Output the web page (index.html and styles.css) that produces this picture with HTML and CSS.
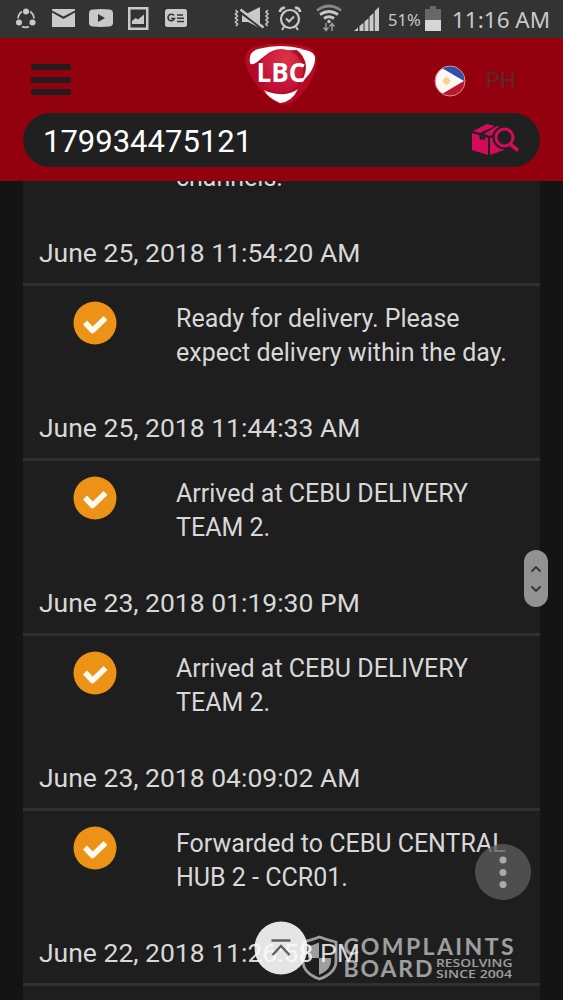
FILE: index.html
```html
<!DOCTYPE html>
<html lang="en">
<head>
<meta charset="utf-8">
<title>LBC Tracking</title>
<link rel="stylesheet" href="styles.css">
</head>
<body>
<div class="screen">
  <div class="statusbar">
    <svg class="status-icons" width="200" height="38" viewBox="0 0 200 38" fill="#c9c9c9">
      <g><circle cx="26" cy="11.500" r="3"/><circle cx="19" cy="22.500" r="3"/><circle cx="32.500" cy="22.500" r="3"/>
      <path d="M22 11.500a9 9 0 0 0-4 7M30 11.500a9 9 0 0 1 4 7M22 26.500a8 8 0 0 0 7 0" fill="none" stroke="#c9c9c9" stroke-width="1.700"/></g>
      <path d="M52 9h23v1.500L63.500 16.500 52 10.500zM52 12.500l11.500 6.500L75 12.500V27H52z"/>
      <path fill-rule="evenodd" d="M93 9.500q8-.8 16 0q4 0 4 4v9q0 4-4 4q-8 .8-16 0q-4 0-4-4v-9q0-4 4-4zM98 14v8l7-4z"/>
      <path fill-rule="evenodd" d="M128 7h20.500v23H128zM130.500 9.500v18H146v-18zM132 24v-3l3.500-3 2.500 1.500 6-5V24z"/>
      <rect x="165" y="9" width="22" height="18" rx="2.500"/>
      <path d="M174 15.500a3.300 3.300 0 1 0 .5 3h-3.500M177 15h6M177 18.300h7M177 21.500h7" fill="none" stroke="#333" stroke-width="1.600"/>
    </svg>
    <svg class="status-icons" width="153" height="38" viewBox="230 0 153 38" fill="none" stroke="#c9c9c9" stroke-width="1.600">
      <path d="M235.500 10l2 2-2 2 2 2-2 2 2 2-2 2 2 2-1.500 2M268 10l-2 2 2 2-2 2 2 2-2 2 2 2-2 2 1.500 2"/>
      <path d="M242 13h6l12-6v21l-12-6h-6z" fill="#c9c9c9" stroke="none"/><path d="M240 11l24 18" stroke="#333" stroke-width="4"/><path d="M240.500 9.500l23 18" stroke-width="2.400"/>
      <circle cx="290" cy="19" r="9" stroke-width="2.200"/><path d="M286 18.500l3 3 5-5M284 27l-2 3M296 27l2 3" stroke-width="2"/><path d="M280 12a4 4 0 0 1 5-4M295 8a4 4 0 0 1 5 4" stroke-width="2.800"/>
      <path d="M317 10.500q12-9 24 0" stroke="#888" stroke-width="2.700"/><path d="M320 14.500q9-6 18 0M324 18.500q5-3.500 10 0" stroke-width="2.800"/><circle cx="329" cy="21.500" r="1.700" fill="#c9c9c9" stroke="none"/>
      <path d="M326 23v7M323.500 27.500l2.500 3 2.500-3M332 31v-7M329.500 26.500l2.500-3 2.500 3" stroke="#999" stroke-width="1.500"/>
      <path d="M354 31l4-3.500V31zM359.500 26l4-3.200V31h-4zM364.500 21.500l4-3.300V31h-4zM369.500 16.500l4-3.500V31h-4zM374.700 11l4.300-4V31h-4.300z" fill="#c9c9c9" stroke="none"/>
    </svg>
    <span class="percent">51%</span>
    <svg class="battery" width="16" height="26" viewBox="0 0 16 26"><path d="M5 0h6v3h5v22H0V3h5z" fill="#686868"/><path d="M0 14h16v11H0z" fill="#d6d6d6"/></svg>
    <span class="clock">11:16 AM</span>
  </div>

  <header class="header">
    <div class="topnav">
      <div class="menu"><i></i><i></i><i></i></div>
      <svg class="logo" width="76" height="68" viewBox="0 0 76 68">
        <defs><radialGradient id="lg" cx=".6" cy=".25" r=".75"><stop offset="0" stop-color="#dd3448"/><stop offset="1" stop-color="#bd0c34"/></radialGradient></defs>
        <path d="M1 19Q2 8 14 6Q38 1 60 6Q72 8 73 20Q73 34 60 51Q49 65 38 65Q26 61 15 48Q2 32 1 19z" fill="#b60926"/>
        <path d="M6 23Q4 12 14 9Q37 3 59 9Q52 11 39 10Q25 12 18 18Q8 27 6 23z" fill="#fff"/>
        <circle cx="37" cy="31" r="22" fill="url(#lg)"/>
        <path d="M20 50Q25 53 35 54Q46 55 54 49Q48 62 36 63Q24 58 20 50z" fill="#fff"/>
        <path d="M51 9Q69 9 71 17Q72 29 57 43Q65 28 60 19Q57 12 51 9z" fill="#fff"/>
        <text x="12.500" y="41.500" textLength="49" lengthAdjust="spacingAndGlyphs" class="logo-text">LBC</text>
      </svg>
      <div class="country">
        <svg width="32" height="32" viewBox="0 0 32 32"><defs><clipPath id="fc"><circle cx="16" cy="16" r="14.500"/></clipPath></defs>
          <g clip-path="url(#fc)"><path d="M0 0h32v16H0z" fill="#2c4fb0"/><path d="M0 16h32v16H0z" fill="#bd1630"/><path d="M1-1 30 16 1 33H-5V-1z" fill="#fff8f2"/></g>
          <circle cx="12.500" cy="16" r="3" fill="#f7c56c"/><path d="M12.500 11v10M8 16h9M9.500 13l6 6M15.500 13l-6 6" stroke="#f9d596" stroke-width="1"/><circle cx="16" cy="16" r="15" fill="none" stroke="#d99" stroke-width="1"/></svg>
        <span>PH</span>
      </div>
    </div>
    <div class="search">
      <span>179934475121</span>
      <svg width="48" height="36" viewBox="0 0 48 36" fill="#d50a59">
        <path d="M0 11l16 5v17L0 28zM1 9L15 2l8 2-15 7zM25 4l7 2-14 8-6-2zM18 16l14-5v17l-14 5z"/>
        <path d="M7 13l6 2v4l-2-2-3 1z" fill="#202020"/>
        <circle cx="32.500" cy="15.500" r="12" fill="#202020"/><circle cx="32.500" cy="15.500" r="8.500" fill="#202020" stroke="#d50a59" stroke-width="3"/><path d="M38 22l8 6.500" stroke="#d50a59" stroke-width="3.800"/>
      </svg>
    </div>
  </header>

  <main class="content">
    <div class="list">
      <section class="row"><div class="event"><p><br>channels.</p></div><time>June 25, 2018 11:54:20 AM</time></section>
      <section class="row"><div class="event"><svg class="check" viewBox="0 0 44 44"><circle cx="22" cy="22" r="21.500"/><path d="M12 21.500l7.500 8L32.500 17"/></svg><p>Ready for delivery. Please<br>expect delivery within the day.</p></div><time>June 25, 2018 11:44:33 AM</time></section>
      <section class="row"><div class="event"><svg class="check" viewBox="0 0 44 44"><circle cx="22" cy="22" r="21.500"/><path d="M12 21.500l7.500 8L32.500 17"/></svg><p>Arrived at CEBU DELIVERY<br>TEAM 2.</p></div><time>June 23, 2018 01:19:30 PM</time></section>
      <section class="row"><div class="event"><svg class="check" viewBox="0 0 44 44"><circle cx="22" cy="22" r="21.500"/><path d="M12 21.500l7.500 8L32.500 17"/></svg><p>Arrived at CEBU DELIVERY<br>TEAM 2.</p></div><time>June 23, 2018 04:09:02 AM</time></section>
      <section class="row"><div class="event"><svg class="check" viewBox="0 0 44 44"><circle cx="22" cy="22" r="21.500"/><path d="M12 21.500l7.500 8L32.500 17"/></svg><p>Forwarded to CEBU CENTRAL<br>HUB 2 - CCR01.</p></div><time>June 22, 2018 11:26:58 PM</time></section>
      <section class="row"></section>
    </div>
  </main>

  <svg class="scroller" width="24" height="58" viewBox="0 0 24 58"><rect width="24" height="57" rx="12" fill="#929292"/><path d="M7.500 21.500l4.500-4.500 4.500 4.500M7.500 36.500l4.500 4.500 4.500-4.500" fill="none" stroke="#333" stroke-width="1.800"/></svg>
  <svg class="more" width="56" height="56" viewBox="0 0 56 56"><circle cx="28" cy="28" r="28" fill="#5c5c5c" opacity=".78"/><g fill="#aaa"><circle cx="28" cy="16" r="3.500"/><circle cx="28" cy="28.500" r="3.500"/><circle cx="28" cy="40.500" r="3.500"/></g></svg>
  <svg class="totop" width="54" height="54" viewBox="0 0 54 54"><circle cx="27" cy="27" r="26.500" fill="#fafafa" opacity=".91"/><path d="M17.500 19.500h19M18.500 34l8.500-9 8.500 9" fill="none" stroke="#606060" stroke-width="2.400"/></svg>
  <svg class="watermark" width="216" height="50" viewBox="300 935 216 50">
    <path d="M303 942Q312 940 319.500 937Q327 940 336 942V961Q336 973 319.500 979Q303 973 303 961z" fill="none" stroke="#fff" stroke-width="2.800"/>
    <path d="M308 946Q314 945 319 942.500V958H308zM319 958H331V961Q331 970 319 975z"/>
    <text class="wm-big" x="343.500" y="955" textLength="170">COMPLAINTS</text>
    <text class="wm-big" x="343.500" y="977" textLength="89">BOARD</text>
    <text class="wm-small" x="436" y="967" textLength="76.500" lengthAdjust="spacingAndGlyphs">RESOLVING</text>
    <text class="wm-small" x="436" y="977.500" textLength="76" lengthAdjust="spacingAndGlyphs">SINCE 2004</text>
  </svg>
</div>
</body>
</html>
```
FILE: styles.css
```css
* { box-sizing: border-box; }
body { margin: 0; background: #141414; font-family: Roboto, sans-serif; }
.screen { position: relative; width: 563px; height: 1000px; overflow: hidden; display: flex; flex-direction: column; background: #141414; }
svg { display: block; flex: none; }
.statusbar { height: 38px; flex: none; display: flex; align-items: center; background: #333; color: #c9c9c9; }
.status-icons + .status-icons { margin-left: 30px; }
.percent { width: 42px; padding-left: 5px; font: 16.500px "Noto Sans", sans-serif; white-space: nowrap; }
.clock { margin-left: 11px; font: 22.500px "Noto Sans", sans-serif; white-space: nowrap; }
.header { height: 143px; flex: none; background: #93000e; }
.topnav { height: 75px; display: flex; align-items: flex-start; }
.menu { display: flex; flex-direction: column; gap: 6.500px; margin: 26px 0 0 31px; }
.menu i { width: 40px; height: 6px; border-radius: 2px; background: #231b1d; }
.logo { margin: 2px 0 0 173px; }
.logo-text { font: bold 26px "Open Sans", sans-serif; fill: #fff; }
.country { display: flex; align-items: center; gap: 20px; margin: 27px 0 0 114px; color: #5b2a28; font-size: 22px; line-height: 30px; }
.search { height: 54px; margin: 0 23px; padding: 2px 20px 0 20px; border-radius: 27px; background: #202020; color: #fff; display: flex; align-items: center; justify-content: space-between; font-size: 31px; }
.search svg { margin-top: -2px; }
.content { flex: 1; min-height: 0; overflow: hidden; padding: 0 23px; }
.list { margin-top: -70px; background: #1e1e1e; }
.row { height: 175px; padding-top: 15px; border-bottom: 3px solid #303030; display: flex; flex-direction: column; }
.event { height: 109px; display: flex; padding-left: 49.500px; }
.event p { margin: 0; padding-top: .5px; color: #d8d8d8; font-size: 25px; line-height: 34.500px; white-space: nowrap; }
.event p:first-child { margin-left: 103.500px; }
.check { width: 44px; height: 44px; margin-right: 59.500px; }
.check circle { fill: #ec9317; }
.check path { fill: none; stroke: #fffaf0; stroke-width: 5.500; stroke-linejoin: round; }
.row time { padding-left: 16px; color: #d8d8d8; font-size: 26.500px; line-height: 35px; white-space: nowrap; }
.scroller { position: absolute; left: 524px; top: 550px; }
.more { position: absolute; left: 475px; top: 844px; }
.totop { position: absolute; left: 254px; top: 921px; }
.watermark { position: absolute; left: 300px; top: 935px; fill: #fff; opacity: .57; }
.wm-big { font: bold 23px Lato, sans-serif; }
.wm-small { font: 600 10px "Open Sans", sans-serif; }
```
